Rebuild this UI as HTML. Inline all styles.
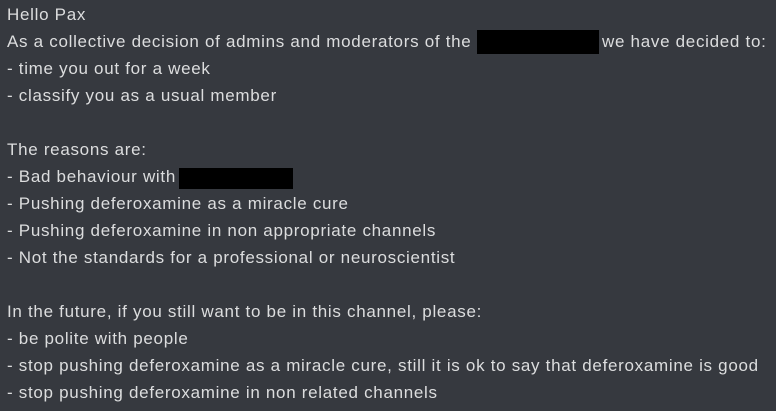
<!DOCTYPE html>
<html><head><meta charset="utf-8"><style>
html,body{margin:0;padding:0;}
body{width:776px;height:411px;background:#36393f;overflow:hidden;position:relative;}
.t{position:absolute;left:7px;top:1px;font-family:"Liberation Sans",sans-serif;font-size:17px;letter-spacing:0.7px;line-height:27px;color:#dcddde;white-space:pre;}
.b{position:absolute;background:#000;}
</style></head><body>
<div class="t">Hello Pax
As a collective decision of admins and moderators of the
- time you out for a week
- classify you as a usual member

The reasons are:
- Bad behaviour with
- Pushing deferoxamine as a miracle cure
- Pushing deferoxamine in non appropriate channels
- Not the standards for a professional or neuroscientist

In the future, if you still want to be in this channel, please:
- be polite with people
- stop pushing deferoxamine as a miracle cure, still it is ok to say that deferoxamine is good
- stop pushing deferoxamine in non related channels</div>
<div class="t" style="left:602px;top:28px">we have decided to:</div>
<div class="b" style="left:477px;top:30px;width:122px;height:24px"></div>
<div class="b" style="left:179px;top:168px;width:114px;height:21px"></div>
</body></html>
